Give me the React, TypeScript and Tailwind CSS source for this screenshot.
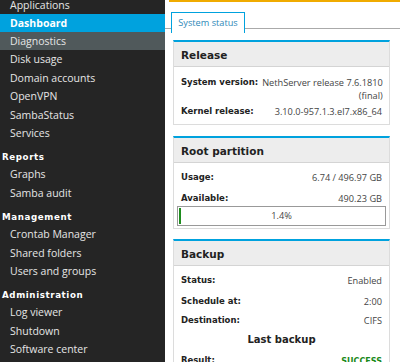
import { ReactNode } from 'react';

const nav: { title?: string; items: string[] }[] = [
  { items: ['Applications', 'Dashboard', 'Diagnostics', 'Disk usage', 'Domain accounts', 'OpenVPN', 'SambaStatus', 'Services'] },
  { title: 'Reports', items: ['Graphs', 'Samba audit'] },
  { title: 'Management', items: ['Crontab Manager', 'Shared folders', 'Users and groups'] },
  { title: 'Administration', items: ['Log viewer', 'Shutdown', 'Software center'] },
];

function Sidebar() {
  return (
    <aside className="w-[165px] shrink-0 bg-[#252525] text-[10.5px] text-[#e6e6e6] font-['Open_Sans',sans-serif] -mt-[4px]">
      {nav.map((group, gi) => (
        <div key={gi}>
          {group.title && (
            <div className="h-[23px] pt-[8px] pl-[2px] leading-[14px] font-['DejaVu_Sans',sans-serif] font-bold text-[8.7px] tracking-[0.6px] text-white">
              {group.title}
            </div>
          )}
          {group.items.map((item) => (
            <div
              key={item}
              className={
                item === 'Dashboard'
                  ? 'h-[18px] leading-[18px] pl-[10px] bg-[#00a2de] font-bold text-white'
                  : item === 'Diagnostics'
                    ? 'h-[18px] leading-[18px] pl-[10px] bg-[#50595b]'
                    : 'h-[18.4px] leading-[18px] pl-[10px]'
              }
            >
              {item}
            </div>
          ))}
        </div>
      ))}
    </aside>
  );
}

function Row({ label, children, className = '' }: { label: string; children: ReactNode; className?: string }) {
  return (
    <div className={`flex justify-between gap-1 leading-[13px] ${className}`}>
      <span className="font-['DejaVu_Sans',sans-serif] font-bold text-[8.5px] text-[#222] whitespace-nowrap">{label}</span>
      <span className="text-right text-[9.2px] text-[#444] font-['Open_Sans',sans-serif] whitespace-nowrap">{children}</span>
    </div>
  );
}

function Card({ title, children }: { title: string; children: ReactNode }) {
  return (
    <section className="border border-[#dcdcdc] border-t-2 border-t-[#00a2de] bg-white">
      <h3 className="h-[25px] bg-[#ededed] border-b border-[#d4d4d4] px-[7px] leading-[26px] text-[10.5px] font-bold text-[#222] font-['DejaVu_Sans',sans-serif]">
        {title}
      </h3>
      <div className="px-[7px]">{children}</div>
    </section>
  );
}

export default function App() {
  return (
    <div className="flex h-[362px] w-[400px] overflow-hidden bg-white">
      <Sidebar />
      <main className="flex-1 min-w-0">
        <div className="ml-[4px] h-[2px] bg-[#f0ab00]" />
        <div className="mt-[6px] border-b border-[#aaaaaa] h-[21px] pl-[6px]">
          <div className="inline-block h-[21px] border border-b-0 border-[#00a2de] bg-white w-[74px] text-center leading-[19px] text-[9.2px] text-[#2e89b8] font-['Open_Sans',sans-serif]">
            System status
          </div>
        </div>
        <div className="flex flex-col pl-[8px] pr-[10px] pt-[11px]">
          <Card title="Release">
            <div className="pt-[9px] pb-[6px]">
              <Row label="System version:">
                NethServer release 7.6.1810
                <br />
                (final)
              </Row>
              <Row label="Kernel release:" className="pt-[3px]">
                3.10.0-957.1.3.el7.x86_64
              </Row>
            </div>
          </Card>
          <div className="h-[11px]" />
          <Card title="Root partition">
            <div className="pt-[8px] pb-[2px]">
              <Row label="Usage:">6.74 / 496.97 GB</Row>
              <Row label="Available:" className="pt-[8px]">490.23 GB</Row>
              <div className="mt-[1px] -mx-[4px] h-[20px] border border-[#999] flex items-center relative">
                <div className="absolute left-[1px] top-[1px] bottom-[1px] w-[2px] bg-[#1e8c1e]" />
                <span className="w-full text-center text-[9.2px] text-[#444] font-['Open_Sans',sans-serif]">1.4%</span>
              </div>
            </div>
          </Card>
          <div className="h-[10px]" />
          <Card title="Backup">
            <div className="pt-[8px]">
              <Row label="Status:">Enabled</Row>
              <Row label="Schedule at:" className="pt-[8px]">2:00</Row>
              <Row label="Destination:" className="pt-[6px]">CIFS</Row>
              <div className="pt-[5px] leading-[15px] text-center font-bold text-[10px] text-[#222] font-['DejaVu_Sans',sans-serif]">
                Last backup
              </div>
              <Row label="Result:" className="pt-[7px]">
                <span className="font-['DejaVu_Sans',sans-serif] font-bold text-[8px] text-[#1a8a1a]">SUCCESS</span>
              </Row>
            </div>
          </Card>
        </div>
      </main>
    </div>
  );
}
